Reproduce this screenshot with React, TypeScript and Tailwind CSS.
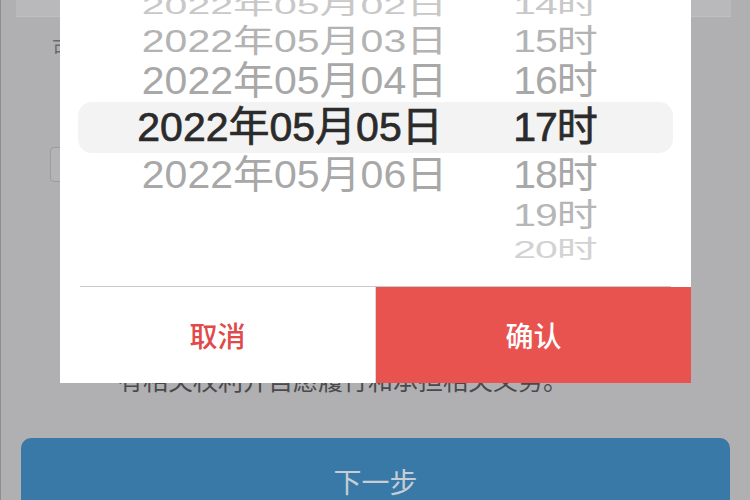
import React from "react";

type Row = {
  h: string;
  date?: string;
  hour: string;
  dateCls: string;
  hourCls: string;
  sel?: boolean;
};

const rows: Row[] = [
  { h: "h-[34px]", date: "2022年05月02日", hour: "14时", dateCls: "text-[#c8c8c8] scale-y-[0.6]", hourCls: "text-[#c8c8c8] scale-y-[0.6]" },
  { h: "h-[38px]", date: "2022年05月03日", hour: "15时", dateCls: "text-[#b3b3b3] scale-y-[0.77]", hourCls: "text-[#b3b3b3] scale-y-[0.77]" },
  { h: "h-[42px]", date: "2022年05月04日", hour: "16时", dateCls: "text-[#a8a8a8] scale-y-[0.95]", hourCls: "text-[#a8a8a8] scale-y-[0.95]" },
  { h: "h-[51px]", date: "2022年05月05日", hour: "17时", dateCls: "text-[#2b2b2b] [-webkit-text-stroke:0.7px_#2b2b2b]", hourCls: "text-[#2b2b2b] [-webkit-text-stroke:0.7px_#2b2b2b]", sel: true },
  { h: "h-[44px]", date: "2022年05月06日", hour: "18时", dateCls: "text-[#a8a8a8] scale-y-[0.95]", hourCls: "text-[#a8a8a8] scale-y-[0.95]" },
  { h: "h-[37px]", hour: "19时", dateCls: "", hourCls: "text-[#b6b6b6] scale-y-[0.77]" },
  { h: "h-[30px]", hour: "20时", dateCls: "", hourCls: "text-[#d2d2d2] scale-y-[0.6]" },
];

const pickerFont = {
  fontFamily: '"Liberation Sans", "Noto Sans CJK SC", sans-serif',
};

export default function App() {
  return (
    <div
      className="relative w-[750px] h-[500px] overflow-hidden bg-[#b0b0b2] border-l border-[#8e8e90]"
      style={{ fontFamily: '"Noto Sans CJK SC", "Noto Sans", sans-serif' }}
    >
      {/* background page */}
      <div className="ml-[15px] w-[715px] h-[17px] bg-[#b9b9bb] border-b border-[#c0c0c2]" />
      <div className="mt-[21px] ml-[51px] text-[20px] leading-[20px] text-[#6a6a6c]">可选时间</div>
      <div className="mt-[89px] ml-[49px] w-[640px] h-[35px] border border-[#9c9c9e] rounded-[4px] bg-[#b4b4b6]" />
      <div className="mt-[185px] ml-[117px] text-[25px] leading-[25px] text-[#4a4a4c] whitespace-nowrap">
        有相关权利并自愿履行和承担相关义务。
      </div>
      <div className="mt-[46px] mx-[20px] h-[80px] rounded-[10px] bg-[#3979a7] flex justify-center pt-[26px]">
        <span className="text-[28px] leading-[34px] text-[#c6cdd4]">下一步</span>
      </div>

      {/* picker modal overlay */}
      <div className="absolute left-[59px] top-[-12px] w-[631px] bg-white flex flex-col">
        <div className="h-[298px] px-[18px] flex flex-col" style={pickerFont}>
          {rows.map((r, i) => (
            <div
              key={i}
              className={`${r.h} shrink-0 flex items-center ${r.sel ? "bg-[#f3f3f3] rounded-[14px]" : ""}`}
            >
              <div className={`w-[424px] flex justify-center ${r.sel ? "" : "pl-[9px]"}`}>
                {r.date ? (
                  <span className={`block text-[41px] leading-none whitespace-nowrap ${r.dateCls}`}>{r.date}</span>
                ) : null}
              </div>
              <div className="w-[106px] flex justify-center">
                <span className={`block text-[41px] leading-none whitespace-nowrap tracking-[-1px] ${r.hourCls}`}>{r.hour}</span>
              </div>
            </div>
          ))}
        </div>
        <div className="mx-[20px] h-[1px] bg-[#cacaca]" />
        <div className="h-[96px] flex">
          <div className="w-[316px] flex items-center justify-center border-r border-[#d8d8d8]">
            <span className="text-[28px] leading-none text-[#e04a4a] font-medium">取消</span>
          </div>
          <div className="flex-1 bg-[#e9534f] flex items-center justify-center">
            <span className="text-[28px] leading-none text-white font-medium">确认</span>
          </div>
        </div>
      </div>
    </div>
  );
}
